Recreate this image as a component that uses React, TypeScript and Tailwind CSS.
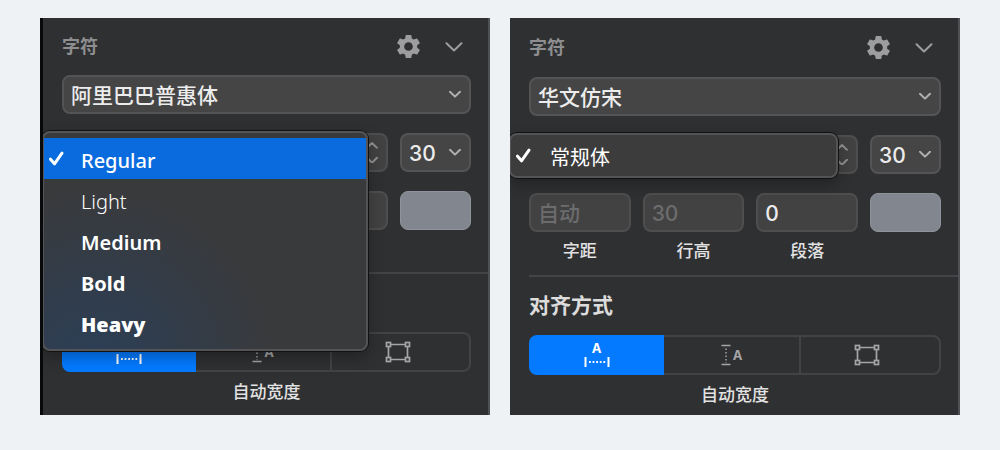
import React, { useId } from "react";
import clsx from "clsx";
import { MdSettings } from "react-icons/md";

const Chevron = ({ className }: { className?: string }) => (
  <svg viewBox="0 0 18 10" fill="none" className={className}>
    <path d="M1.5 1.2L9 8.5L16.5 1.2" stroke="currentColor" strokeLinecap="round" strokeLinejoin="round" strokeWidth="2" vectorEffect="non-scaling-stroke" />
  </svg>
);

const CheckMark = () => (
  <svg width="16" height="16" viewBox="0 0 16 16" fill="none" className="shrink-0">
    <path d="M1.5 8.2L5.5 12.8L13 2.2" stroke="white" strokeWidth="3" strokeLinecap="round" strokeLinejoin="round" />
  </svg>
);

const WidthIcon = () => (
  <span className="flex flex-col items-center gap-1 text-[13px] leading-[10px] font-bold">
    A
    <svg width="26" height="10" viewBox="0 0 26 10" fill="none" stroke="currentColor">
      <path d="M1.5 0V10M24.5 0V10" strokeWidth="2" />
      <path d="M5 5H22" strokeWidth="1.8" strokeDasharray="1.8 1.8" />
    </svg>
  </span>
);

const HeightIcon = () => (
  <span className="flex items-center gap-0.5 text-[13px] leading-[10px] font-bold">
    <svg width="10" height="22" viewBox="0 0 10 22" fill="none" stroke="currentColor">
      <path d="M0.5 1.5H9.5M0.5 20.5H9.5" strokeWidth="1.5" />
      <path d="M5 4.5V19" strokeWidth="1.5" strokeDasharray="1.5 2" />
    </svg>
    A
  </span>
);

const FixedIcon = () => (
  <svg width="26" height="22" viewBox="0 0 26 22" fill="none" stroke="currentColor" strokeWidth="1.7">
    <path d="M5.5 3.5H20.5M5.5 18.5H20.5M3.5 5.5V16.5M22.5 5.5V16.5" />
    <rect x="1.5" y="1.5" width="4" height="4" />
    <rect x="20.5" y="1.5" width="4" height="4" />
    <rect x="1.5" y="16.5" width="4" height="4" />
    <rect x="20.5" y="16.5" width="4" height="4" />
  </svg>
);

type SelectProps = { label: string; value: string; className?: string };

const Select = ({ label, value, className }: SelectProps) => (
  <div className={clsx("grid items-center", className)}>
    <select
      aria-label={label}
      className="col-start-1 row-start-1 h-[39px] w-full appearance-none rounded-lg border-2 border-[#545456] bg-[#454545] pt-0.5 pl-[7px] text-[21px] font-medium text-[#ececec]"
    >
      <option>{value}</option>
    </select>
    <Chevron className="pointer-events-none col-start-1 row-start-1 mr-2.5 w-3 justify-self-end text-[#b0b0b0]" />
  </div>
);

type Field = { label?: string; value?: string; placeholder?: string };

const NumberField = ({ label, value, placeholder }: Field) => {
  const id = useId();
  return (
    <div className="flex min-w-0 flex-1 flex-col items-center gap-[7px]">
      <input
        id={id}
        defaultValue={value}
        placeholder={placeholder}
        className="h-[39px] w-full rounded-lg border-2 border-[#4e4e4f] bg-[#424243] px-[7px] pt-0.5 text-[21px] font-medium text-[#ececec] placeholder:text-[#6c6c6d]"
      />
      {label && (
        <label htmlFor={id} className="text-[17px] leading-6 font-medium text-[#e2e2e2]">
          {label}
        </label>
      )}
    </div>
  );
};

type MenuItem = { name: string; className: string };

type PanelProps = {
  className: string;
  headerClass: string;
  bodyClass: string;
  menuClass: string;
  font: string;
  items: MenuItem[];
  highlight?: boolean;
  fields: Field[];
  heading?: string;
};

const Panel = ({ className, headerClass, bodyClass, menuClass, font, items, highlight, fields, heading }: PanelProps) => (
  <section className={clsx("overflow-hidden border-r-2 border-r-[#505154] bg-[#2f3032]", className)}>
    <div className={clsx("flex items-center justify-between pr-[17px]", headerClass)}>
      <h2 className="text-[18px] font-bold text-[#8e8e90]">字符</h2>
      <div className="flex items-center gap-[22px] pr-2 text-[#9d9d9f]">
        <button aria-label="设置">
          <MdSettings size={29} />
        </button>
        <button aria-label="收起">
          <Chevron className="w-[18px]" />
        </button>
      </div>
    </div>

    <div className={clsx("flex flex-col gap-[19px] pr-[17px]", bodyClass)}>
      <Select label="字体" value={font} />

      <div className="relative flex gap-3">
        <button
          aria-label="字重"
          aria-haspopup="listbox"
          aria-expanded="true"
          className="flex h-[39px] flex-1 flex-col items-end justify-center gap-2 rounded-lg border-2 border-[#4e4e4f] bg-[#424243] pr-2 text-[#909091]"
        >
          <Chevron className="w-3 rotate-180" />
          <Chevron className="w-3" />
        </button>
        <Select label="字号" value="30" className="w-[71px]" />

        <ul role="listbox" aria-label="字重" className={clsx("absolute z-10 rounded-lg border-2 border-[#545456] shadow-[0_0_0_1px_#121213,0_6px_16px_rgba(0,0,0,0.3)]", menuClass)}>
          {items.map((item, i) => (
            <li key={item.name} role="option" aria-selected={i === 0}>
              <button className={clsx("flex h-[41px] w-full items-center gap-4 pl-[5px] text-white", highlight && i === 0 && "bg-[#096bdd]")}>
                <span className="w-4">{i === 0 && <CheckMark />}</span>
                <span className={item.className}>{item.name}</span>
              </button>
            </li>
          ))}
        </ul>
      </div>

      <div className="flex items-start gap-3">
        {fields.map((field, i) => (
          <NumberField key={i} {...field} />
        ))}
        <button aria-label="颜色" className="h-[39px] w-[71px] rounded-lg border border-[#8f939b] bg-[#82868f]" />
      </div>
    </div>

    <div className="pl-[19px]">
      <div className="border-t-2 border-[#434447]">
        <div className="flex h-[58px] items-center">
          {heading && <h2 className="text-[21px] font-bold text-[#dcdcdc]">{heading}</h2>}
        </div>
        <div className="mr-[17px] grid h-10 grid-cols-[20fr_20fr_21fr] text-[#a5a5a7]">
          <button aria-label="自动宽度" aria-pressed="true" className="flex items-center justify-center rounded-l-lg bg-[#037aff] text-white">
            <WidthIcon />
          </button>
          <button aria-label="自动高度" className="flex items-center justify-center border-y-2 border-[#434345]">
            <HeightIcon />
          </button>
          <button aria-label="固定尺寸" className="flex items-center justify-center rounded-r-lg border-2 border-[#434345] pr-1.5">
            <FixedIcon />
          </button>
        </div>
        <p className="mt-2 mr-[17px] text-center text-[17px] leading-6 font-medium text-[#e2e2e2]">自动宽度</p>
      </div>
    </div>
  </section>
);

const weights: MenuItem[] = [
  { name: "Regular", className: "pt-1 font-['Noto_Sans'] text-[20px] font-medium" },
  { name: "Light", className: "pt-1 font-['Noto_Sans'] text-[20px] font-light" },
  { name: "Medium", className: "pt-1 font-['Noto_Sans'] text-[20px] font-semibold" },
  { name: "Bold", className: "pt-1 font-['Noto_Sans'] text-[20px] font-bold" },
  { name: "Heavy", className: "pt-1 font-['Noto_Sans'] text-[20px] font-black" },
];

const App = () => {
  return (
    <main className="grid min-h-screen grid-cols-2 items-start gap-5 bg-[#eef2f5] px-10 py-[18px] font-[Inter,'Noto_Sans_CJK_SC',sans-serif]">
      <Panel
        className="border-l-3 border-l-[#08090a] pb-[11px]"
        headerClass="h-[57px] pl-[19px]"
        bodyClass="h-[197px] pl-[19px]"
        menuClass="-top-0.5 right-[103px] -left-5 bg-[radial-gradient(circle_at_15%_110%,#2b3f58,#393a3c_50%)] pt-[5px] pb-1.5"
        font="阿里巴巴普惠体"
        items={weights}
        highlight
        fields={[{}, {}, {}]}
      />
      <Panel
        className="pb-2"
        headerClass="h-[59px] pl-[19px]"
        bodyClass="h-[198px] pl-[19px]"
        menuClass="-top-0.5 right-[103px] -left-5 bg-[#3c3c3d]"
        font="华文仿宋"
        items={[{ name: "常规体", className: "pt-1 pl-0.5 text-[20px]" }]}
        fields={[
          { label: "字距", placeholder: "自动" },
          { label: "行高", placeholder: "30" },
          { label: "段落", value: "0" },
        ]}
        heading="对齐方式"
      />
    </main>
  );
};

export default App;
